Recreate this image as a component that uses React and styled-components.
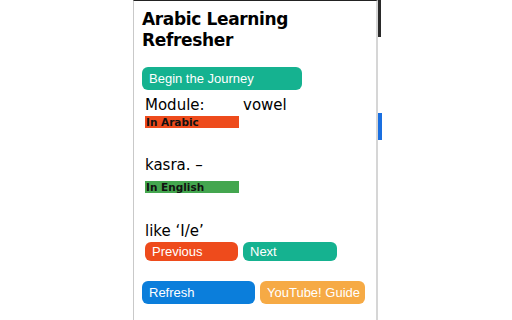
import React from 'react';
import styled, { createGlobalStyle } from 'styled-components';

const GlobalStyle = createGlobalStyle`
  html, body {
    margin: 0;
    padding: 0;
    background: #ffffff;
  }
  body {
    font-family: "DejaVu Sans", "Liberation Sans", sans-serif;
  }
`;

const Page = styled.div`
  position: relative;
  display: flex;
  box-sizing: border-box;
  width: 512px;
  height: 320px;
  padding-left: 133px;
  overflow: hidden;
`;

// bits of the browser page peeking out behind the popup
const Peek = styled.div`
  position: absolute;
  left: ${props => props.left}px;
  top: ${props => props.top}px;
  width: ${props => props.w}px;
  height: ${props => props.h}px;
  background: ${props => props.bg};
`;

const Popup = styled.div`
  position: relative;
  box-sizing: border-box;
  width: 245px;
  height: 320px;
  background: #fff;
  border-left: 1px solid #c9c9c9;
  border-right: 2px solid #d6d6d6;
  border-top: 1px solid #222;
  padding: 8px 8px 0 8px;
`;

const Title = styled.h1`
  margin: 0;
  font-family: "DejaVu Sans", sans-serif;
  font-size: 17px;
  line-height: 21px;
  letter-spacing: -0.35px;
  font-weight: bold;
  color: #000;
`;

const Button = styled.button`
  display: block;
  box-sizing: border-box;
  width: ${props => props.w}px;
  height: ${props => props.h || 23}px;
  padding: 0 0 0 ${props => props.pl || 7}px;
  border: none;
  border-radius: 6px;
  background: ${props => props.bg};
  color: #fff;
  text-align: left;
  font-family: "Liberation Sans", Arial, sans-serif;
  font-size: 13px;
`;

const BeginButton = styled(Button)`
  margin-top: 16px;
`;

const Body = styled.div`
  padding-left: 3px;
`;

const ModuleRow = styled.div`
  display: grid;
  grid-template-columns: 98px auto;
  margin-top: 6px;
  font-size: 15px;
  line-height: 18px;
  color: #000;
`;

const Tag = styled.div`
  width: 94px;
  height: 12px;
  background: ${props => props.bg};
  color: #111;
  font-size: 10.5px;
  font-weight: bold;
  line-height: 12px;
  padding-left: 1px;
  box-sizing: border-box;
  margin-top: ${props => props.mt || 0}px;
`;

const Word = styled.div`
  font-size: 15px;
  line-height: 18px;
  color: #000;
  margin-top: ${props => props.mt}px;
`;

const ButtonRow = styled.div`
  display: flex;
  gap: ${props => props.gap}px;
  margin-top: ${props => props.mt}px;
  margin-left: ${props => props.ml || 0}px;
`;

export default function App() {
  return (
    <Page>
      <GlobalStyle />
      <Peek left={377} top={0} w={4} h={37} bg="#2a2a2a" />
      <Peek left={378} top={113} w={4} h={27} bg="#1a6fe0" />
      <Popup>
        <Title>
          Arabic Learning
          <br />
          Refresher
        </Title>
        <BeginButton w={160} bg="#15b290">Begin the Journey</BeginButton>
        <Body>
          <ModuleRow>
            <span>Module:</span>
            <span>vowel</span>
          </ModuleRow>
          <Tag bg="#ee4b1c" mt={2}>In Arabic</Tag>
          <Word mt={28}>kasra. –</Word>
          <Tag bg="#44a64f" mt={7}>In English</Tag>
          <Word mt={29}>like ‘I/e’</Word>
        </Body>
        <ButtonRow gap={5} mt={2} ml={3}>
          <Button w={93} h={19} bg="#ee4b1c">Previous</Button>
          <Button w={94} h={19} bg="#15b290">Next</Button>
        </ButtonRow>
        <ButtonRow gap={5} mt={20}>
          <Button w={113} bg="#0b7edb">Refresh</Button>
          <Button w={105} bg="#f6aa45">YouTube! Guide</Button>
        </ButtonRow>
      </Popup>
    </Page>
  );
}
